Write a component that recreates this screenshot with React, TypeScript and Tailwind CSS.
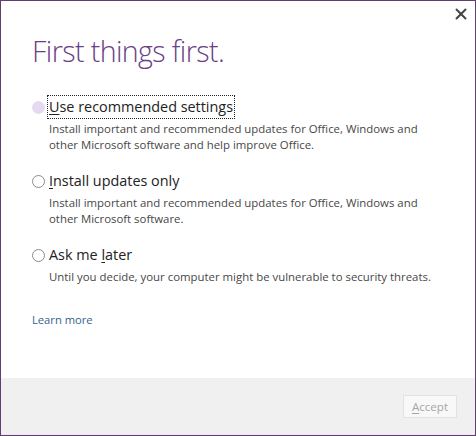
import { X } from "lucide-react";

const font = { fontFamily: '"Segoe UI", "Open Sans", sans-serif' };

function Option({
  label,
  accessKey,
  description,
  selected,
  focused,
}: {
  label: string;
  accessKey: number;
  description: string[];
  selected?: boolean;
  focused?: boolean;
}) {
  const before = label.slice(0, accessKey);
  const key = label.slice(accessKey, accessKey + 1);
  const after = label.slice(accessKey + 1);
  return (
    <div className="flex flex-col">
      <div className="flex items-center h-[22px]">
        <span
          className={`w-[13px] h-[13px] rounded-full flex-shrink-0 ${
            selected ? "bg-[#e6daf0]" : "border border-[#8c8c8c] bg-white"
          }`}
        />
        <span
          className={`ml-[3px] px-[1px] text-[14.4px] leading-[22px] text-[#222] ${
            focused ? "outline outline-1 outline-dotted outline-[#222]" : ""
          }`}
        >
          {before}
          <span className="underline underline-offset-2">{key}</span>
          {after}
        </span>
      </div>
      <div className="ml-[17px] mt-[3px] text-[11.4px] leading-[16px] text-[#474747]">
        {description.map((line) => (
          <div key={line}>{line}</div>
        ))}
      </div>
    </div>
  );
}

export default function App() {
  return (
    <div
      className="w-[476px] h-[436px] border border-[#5e3f6f] bg-white flex flex-col relative"
      style={font}
    >
      <button className="absolute top-[4px] right-[5px] text-[#444]">
        <X size={18} strokeWidth={2.6} />
      </button>
      <div className="flex-1 pl-[31px] pr-[20px]">
        <h1 className="mt-[30px] text-[28.6px] leading-[40px] font-light text-[#6a3f86] tracking-[-0.6px]">
          First things first.
        </h1>
        <div className="mt-[25px] flex flex-col gap-[17px]">
          <Option
            label="Use recommended settings"
            accessKey={0}
            selected
            focused
            description={[
              "Install important and recommended updates for Office, Windows and",
              "other Microsoft software and help improve Office.",
            ]}
          />
          <Option
            label="Install updates only"
            accessKey={0}
            description={[
              "Install important and recommended updates for Office, Windows and",
              "other Microsoft software.",
            ]}
          />
          <Option
            label="Ask me later"
            accessKey={7}
            description={["Until you decide, your computer might be vulnerable to security threats."]}
          />
        </div>
        <div className="mt-[27px] text-[11.2px] leading-[16px] text-[#31618e]">Learn more</div>
      </div>
      <div className="h-[57px] bg-[#f0f0f0] border-b border-[#efe6f5] flex items-start justify-end pt-[17px] pr-[18px]">
        <button className="w-[54px] h-[23px] border border-[#e2e2e2] bg-[#f8f8f8] text-[11.6px] text-[#a6a6a6]">
          <span className="underline underline-offset-2">A</span>ccept
        </button>
      </div>
    </div>
  );
}
